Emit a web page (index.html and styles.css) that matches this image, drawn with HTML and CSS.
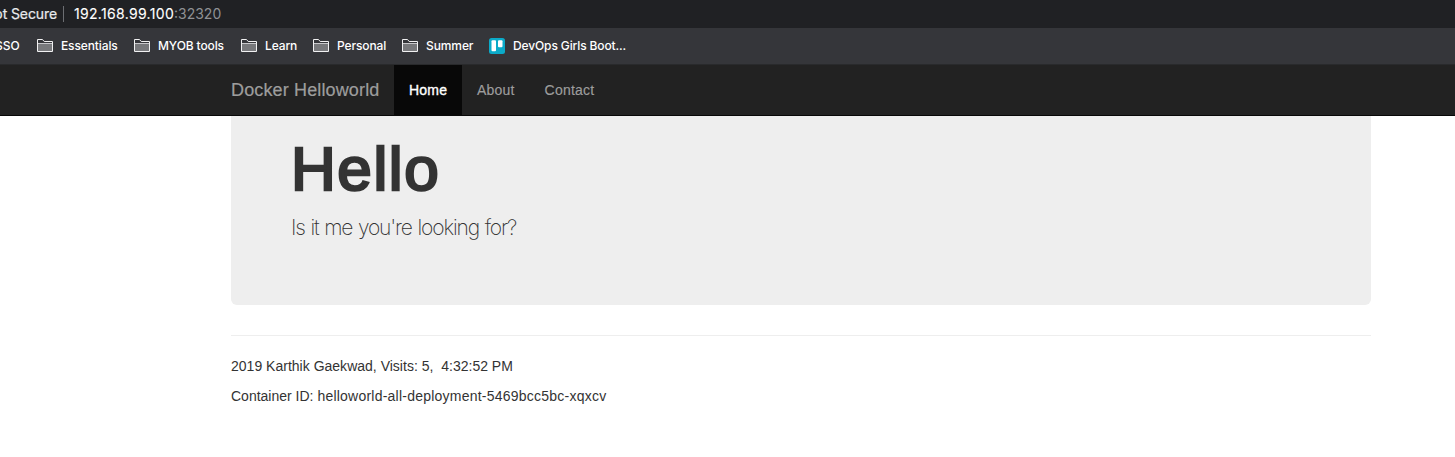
FILE: index.html
```
<!DOCTYPE html>
<html lang="en">
<head>
<meta charset="utf-8">
<title>Docker Helloworld</title>
<link rel="stylesheet" href="styles.css">
</head>
<body>
<svg class="defs" width="0" height="0" aria-hidden="true">
  <symbol id="folder" viewBox="0 0 16 13">
    <path d="M.5 12.5V.5H5.5L7.2 2.5H15.5V12.5Z" fill="none" stroke="#f1f1f2"/>
    <path d="M1 5H15V12H1Z" fill="#77787b"/>
    <path d="M1 4.5H15" stroke="#d8d8da" stroke-width=".9"/>
  </symbol>
</svg>
<div class="address">
  <span class="secure">Not Secure</span>
  <span class="divider"></span>
  <span class="host">192.168.99.100</span><span class="port">:32320</span>
</div>
<div class="bookmarks">
  <span class="mark sso">SSO</span>
  <span class="mark essentials"><svg class="icon"><use href="#folder"/></svg><span class="label">Essentials</span></span>
  <span class="mark tools"><svg class="icon"><use href="#folder"/></svg><span class="label">MYOB tools</span></span>
  <span class="mark learn"><svg class="icon"><use href="#folder"/></svg><span class="label">Learn</span></span>
  <span class="mark personal"><svg class="icon"><use href="#folder"/></svg><span class="label">Personal</span></span>
  <span class="mark summer"><svg class="icon"><use href="#folder"/></svg><span class="label">Summer</span></span>
  <span class="mark devops"><svg class="board" viewBox="0 0 16 16"><rect width="16" height="16" rx="2.5" fill="#0baac8"/><rect x="2.5" y="2.3" width="4.5" height="11" rx="1" fill="#fff"/><rect x="9" y="2.3" width="4.5" height="7" rx="1" fill="#fff"/></svg><span class="label">DevOps Girls Boot...</span></span>
</div>
<nav class="navbar">
  <div class="container nav-row">
    <a class="brand">Docker Helloworld</a>
    <a class="link active">Home</a>
    <a class="link">About</a>
    <a class="link">Contact</a>
  </div>
</nav>
<main class="container">
  <section class="jumbotron">
    <h1>Hello</h1>
    <p>Is it me you're looking for?</p>
  </section>
  <hr>
  <footer>
    <p class="visits">2019 Karthik Gaekwad, Visits: 5,&nbsp; 4:32:52 PM</p>
    <p>Container ID: <span class="cid">helloworld-all-deployment-5469bcc5bc-xqxcv</span></p>
  </footer>
</main>
</body>
</html>
```
FILE: styles.css
```
* { box-sizing: border-box; }
body {
  margin: 0;
  height: 457px;
  overflow: hidden;
  background: #fff;
  color: #333;
  font: 14px/20px "Liberation Sans", Arial, sans-serif;
}
.defs { position: absolute; }
.address {
  display: flex;
  align-items: center;
  height: 28px;
  background: #202124;
  color: #e8eaed;
  font: 14px/28px Inter, sans-serif;
  white-space: nowrap;
}
.secure { width: 57px; display: flex; justify-content: flex-end; letter-spacing: -.1px; -webkit-text-stroke: .2px; }
.divider { width: 1px; height: 16px; margin: 0 10px 0 6px; background: #6c6e72; }
.host { width: 100px; color: #fff; letter-spacing: .32px; -webkit-text-stroke: .1px; }
.port { color: #8f9194; }
.bookmarks {
  display: flex;
  height: 37px;
  padding-bottom: 1px;
  background: #35363a;
  border-bottom: 1px solid #292a2c;
  color: #fff;
  font: 500 12px/35px Inter, sans-serif;
  letter-spacing: -.12px;
  white-space: nowrap;
}
.mark { display: flex; align-items: center; flex: none; }
.sso { width: 42px; margin-left: -5px; letter-spacing: 0; }
.essentials { width: 97px; }
.tools { width: 107px; }
.learn { width: 72px; }
.personal { width: 89px; }
.summer { width: 87px; letter-spacing: -.1px; }
.icon { width: 16px; height: 13px; margin-right: 8px; }
.board { width: 16px; height: 16px; margin-right: 8px; }
.navbar { height: 51px; background: #222; border-bottom: 1px solid #080808; }
.container { width: 1140px; margin-left: 231px; }
.nav-row { display: flex; }
.brand {
  width: 163px;
  color: #9d9d9d;
  font-size: 18px;
  line-height: 50px;
  letter-spacing: .14px;
  white-space: nowrap;
  -webkit-text-stroke: .2px;
}
.link { padding: 0 15px; color: #9d9d9d; line-height: 50px; letter-spacing: .2px; -webkit-text-stroke: .15px; }
.active { width: 68px; height: 51px; background: #080808; color: #fff; -webkit-text-stroke: .35px; }
.jumbotron {
  height: 189px;
  padding: 18px 60px 0;
  background: #eee;
  border-radius: 0 0 6px 6px;
}
h1 {
  margin: 0;
  font-size: 62px;
  font-weight: 400;
  line-height: 70px;
  letter-spacing: 1.6px;
  -webkit-text-stroke: 2.6px #333;
}
.jumbotron p { margin: 9px 0 0; font: 200 21px/30px Inter, sans-serif; letter-spacing: -1.13px; word-spacing: .9px; }
hr { margin: 30px 0 20px; border: 0; border-top: 1px solid #eee; }
footer p { margin: 0 0 10px; }
.visits { letter-spacing: .01px; }
.cid { letter-spacing: .23px; }
```
